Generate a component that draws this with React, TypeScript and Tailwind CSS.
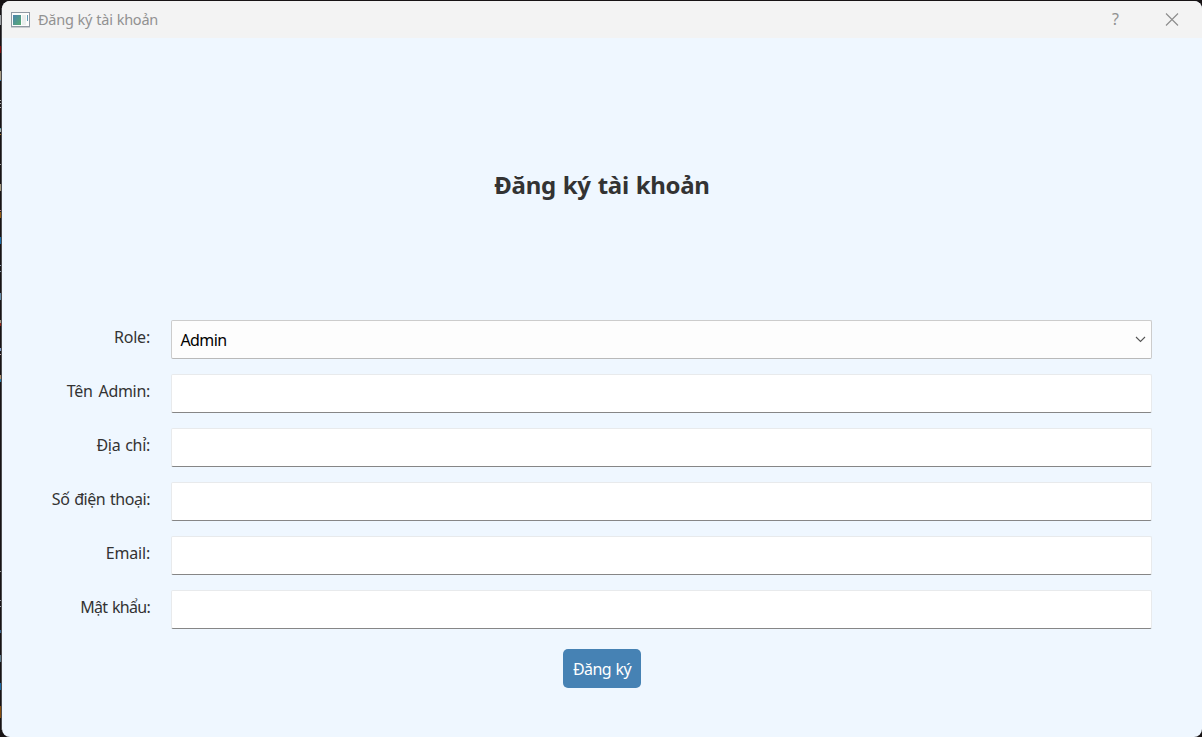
const fields = [
  { id: "name", label: "Tên Admin:", type: "text", fit: "tracking-[-0.3px] [word-spacing:2px]" },
  { id: "address", label: "Địa chỉ:", type: "text", fit: "tracking-[-0.3px] [word-spacing:1px]" },
  { id: "phone", label: "Số điện thoại:", type: "tel", fit: "tracking-[-0.45px] [word-spacing:1px]" },
  { id: "email", label: "Email:", type: "email", fit: "tracking-[-0.2px]" },
  { id: "password", label: "Mật khẩu:", type: "password", fit: "tracking-[-0.7px] [word-spacing:1px]" },
];

const slivers: [number, number, string][] = [
  [15, 10, "#9a9da0"], [46, 7, "#7d0909"], [71, 9, "#a59a82"], [80, 1, "#3f7eae"],
  [100, 1, "#aaaaaa"], [103, 1, "#aaaaaa"], [107, 1, "#aaaaaa"], [128, 1, "#4f9cae"],
  [129, 3, "#a9b5b5"], [134, 1, "#a87424"], [164, 1, "#999999"], [184, 7, "#a3987e"],
  [210, 1, "#bd7882"], [212, 6, "#91580e"], [237, 7, "#176ca8"], [265, 1, "#8b9aab"],
  [271, 1, "#8b9aab"], [293, 7, "#648ba8"], [320, 3, "#a59886"], [323, 3, "#8f2418"],
  [348, 3, "#7f9ac4"], [354, 1, "#bba5a7"], [375, 4, "#ad8e6c"], [379, 3, "#287ca8"],
  [571, 1, "#999999"], [600, 1, "#9999a5"], [606, 1, "#9999a5"], [630, 3, "#35628c"],
  [655, 7, "#5c7888"], [683, 7, "#1766a3"], [706, 12, "#854c0c"],
];

function Label({ id, text, fit }: { id: string; text: string; fit: string }) {
  return (
    <label htmlFor={id} className={`w-[148px] shrink-0 pt-[5px] text-right text-base leading-6 whitespace-nowrap text-[#333333] ${fit}`}>
      {text}
    </label>
  );
}

export default function App() {
  return (
    <div className="relative h-[737px] w-[1202px] overflow-hidden bg-[#171315] pt-px pl-[2px] font-['Noto_Sans',sans-serif]">
      <svg className="absolute top-0 left-0" width="2" height="737" aria-hidden="true">
        {slivers.map(([y, h, color]) => (
          <rect key={y} x="0" y={y} width="1" height={h} fill={color} />
        ))}
        <rect x="1" y="8" width="1" height="722" fill="#4b4b4e" />
      </svg>
      <main className="flex h-[736px] w-[1200px] flex-col overflow-hidden rounded-[8px] bg-[#eff7ff]">
        <header className="flex h-[37px] shrink-0 items-center bg-[#f3f3f3] pl-[9px] text-[#919191]">
          <svg width="19" height="16" viewBox="0 0 19 16" aria-hidden="true">
            <defs>
              <linearGradient id="pane" x1="0" y1="0" x2="1" y2="1">
                <stop offset="0" stopColor="#4b83ae" />
                <stop offset="1" stopColor="#58ac72" />
              </linearGradient>
            </defs>
            <rect x=".5" y=".5" width="18" height="14" fill="#fcfcfc" stroke="#9099a3" />
            <path d="M0 15.5h19" stroke="#c9cdd0" />
            <path d="M2 3h8v10H2z" fill="url(#pane)" />
            <path d="M11 3h4v10h-4z" fill="#e9eeed" />
            <path d="M16 3h1v6h-1z" fill="#609bb5" />
          </svg>
          <span className="mb-[2px] ml-2 text-[14.500px] leading-5 tracking-[-0.25px] [word-spacing:0.5px] whitespace-nowrap">Đăng ký tài khoản</span>
          <button className="mr-[46px] mb-[2px] ml-auto text-base leading-5" aria-label="Help">?</button>
          <button className="mr-[23px]" aria-label="Close">
            <svg width="14" height="13" viewBox="0 0 14 13" fill="none" stroke="#8c8c8c" strokeWidth="1.1">
              <path d="M1 .5l12 12M13 .5l-12 12" />
            </svg>
          </button>
        </header>
        <div className="flex h-[282px] shrink-0 justify-center pt-[131px]">
          <h1 className="h-8 text-[24px] leading-8 font-bold tracking-[-0.3px] whitespace-nowrap text-[#333333] [word-spacing:1px]">Đăng ký tài khoản</h1>
        </div>
        <form className="flex flex-col gap-[15px]">
          <div className="flex h-[39px]">
            <Label id="role" text="Role:" fit="tracking-[-0.2px]" />
            <button id="role" type="button" className="ml-[21px] flex w-[981px] items-center rounded-[2px] border border-[#cccccc] border-b-[#b9b9b9] bg-[#fdfdfd] pl-[8.500px] pr-[5px] text-base leading-6 text-black">
              <span className="tracking-[-0.6px]">Admin</span>
              <svg className="ml-auto" width="11" height="7" viewBox="0 0 11 7" fill="none" stroke="#555555" strokeWidth="1.1">
                <path d="M1 1l4.500 4.500L10 1" />
              </svg>
            </button>
          </div>
          {fields.map((f) => (
            <div key={f.id} className="flex h-[39px]">
              <Label id={f.id} text={f.label} fit={f.fit} />
              <input id={f.id} type={f.type} className="ml-[21px] w-[981px] rounded-[2px] border border-[#e8eaec] border-b-[#868686] bg-white px-2 outline-none" />
            </div>
          ))}
          <button type="button" className="mt-[5px] ml-[561px] h-[39px] w-[78px] rounded-[5px] bg-[#4682b4] text-base tracking-[-0.6px] whitespace-nowrap text-white [word-spacing:1px]">
            Đăng ký
          </button>
        </form>
      </main>
    </div>
  );
}
